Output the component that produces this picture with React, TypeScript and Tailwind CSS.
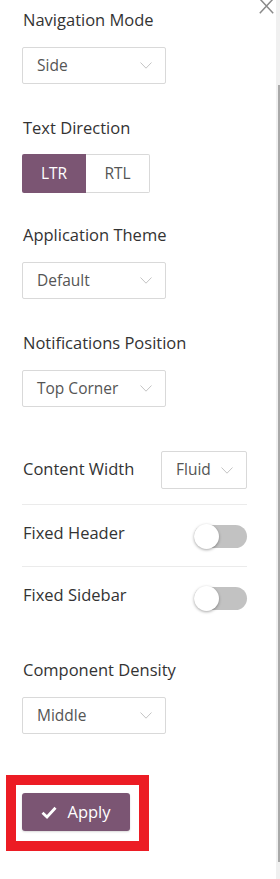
const font = { fontFamily: '"Open Sans", "Noto Sans", sans-serif' };

function Chevron() {
	return (
		<svg width="12" height="7" viewBox="0 0 12 7" fill="none">
			<path d="M0.5 0.5 L6 6.2 L11.5 0.5" stroke="#c4c4c4" strokeWidth="1" />
		</svg>
	);
}

function Select({ value, className = "" }: { value: string; className?: string }) {
	return (
		<div
			className={`flex h-[37px] w-[144px] items-center justify-between rounded-[2px] border border-[#d9d9d9] bg-white pl-[14px] pr-[13px] text-[15.5px] text-[#555] ${className}`}
		>
			<span>{value}</span>
			<Chevron />
		</div>
	);
}

function Label({ children, className = "" }: { children: string; className?: string }) {
	return (
		<div className={`h-[20px] pl-[1px] text-[16.5px] leading-[20px] text-[#333] ${className}`}>
			{children}
		</div>
	);
}

function Toggle() {
	return (
		<div className="relative h-[25px] w-[53px]">
			<div className="absolute inset-x-0 top-[1px] h-[23px] rounded-full bg-[#c2c2c2]" />
			<div className="absolute left-0 top-0 h-[25px] w-[25px] rounded-full bg-white shadow-[0_1px_3px_rgba(0,0,0,0.35)]" />
		</div>
	);
}

export default function App() {
	return (
		<div className="relative flex h-[879px] w-[280px] overflow-hidden bg-white" style={font}>
			<svg
				className="absolute left-[259px] top-[-2px]"
				width="15"
				height="16"
				viewBox="0 0 15 16"
			>
				<path d="M0.8 0.8 L14.2 15.2 M14.2 0.8 L0.8 15.2" stroke="#8a8a8a" strokeWidth="1.5" />
			</svg>

			<div className="flex w-[276px] flex-col pl-[22px] pr-[29px] pt-[10px]">
				<Label>Navigation Mode</Label>
				<Select value="Side" className="mt-[17px]" />

				<Label className="mt-[34px]">Text Direction</Label>
				<div className="mt-[16px] flex h-[39px] w-[128px] text-[15.5px]">
					<div className="flex w-[64px] items-center justify-center rounded-l-[2px] bg-[#7b5573] text-white">
						LTR
					</div>
					<div className="flex w-[64px] items-center justify-center rounded-r-[2px] border border-l-0 border-[#d9d9d9] text-[#555]">
						RTL
					</div>
				</div>

				<Label className="mt-[32px]">Application Theme</Label>
				<Select value="Default" className="mt-[17px]" />

				<Label className="mt-[34px]">Notifications Position</Label>
				<Select value="Top Corner" className="mt-[17px]" />

				<div className="mt-[44px] flex items-center justify-between border-b border-[#ebebeb] pb-[15px]">
					<Label className="mb-[2px]">Content Width</Label>
					<div className="flex h-[38px] w-[86px] items-center justify-between rounded-[2px] border border-[#d9d9d9] pl-[14px] pr-[13px] text-[15.5px] text-[#555]">
						<span>Fluid</span>
						<Chevron />
					</div>
				</div>

				<div className="flex items-center justify-between border-b border-[#ebebeb] pb-[16px] pt-[18px]">
					<Label className="mb-[7px]">Fixed Header</Label>
					<Toggle />
				</div>

				<div className="flex items-center justify-between pt-[18px]">
					<Label className="mb-[7px]">Fixed Sidebar</Label>
					<Toggle />
				</div>

				<Label className="mt-[48px]">Component Density</Label>
				<Select value="Middle" className="mt-[17px]" />

				<div className="-ml-[16px] mt-[41px] w-[143px] border-[10px] border-[#ec1c24] pb-[10px] pl-[6px] pr-[9px] pt-[8px]">
					<button
						type="button"
						className="flex h-[38px] w-[108px] items-center justify-center gap-[10px] rounded-[3px] bg-[#7b5573] text-[16.5px] text-white shadow-[0_1px_2px_rgba(0,0,0,0.15)]"
					>
						<svg width="16" height="13" viewBox="0 0 16 13" fill="none">
							<path d="M1.5 6.8 L6 11 L14.5 1.8" stroke="white" strokeWidth="2.8" />
						</svg>
						Apply
					</button>
				</div>
			</div>

			<div className="flex w-[4px] justify-end bg-[#f0f0f0]">
				<div className="mt-[85px] h-[777px] w-[2px] bg-[#a9a9a9]" />
			</div>
		</div>
	);
}
